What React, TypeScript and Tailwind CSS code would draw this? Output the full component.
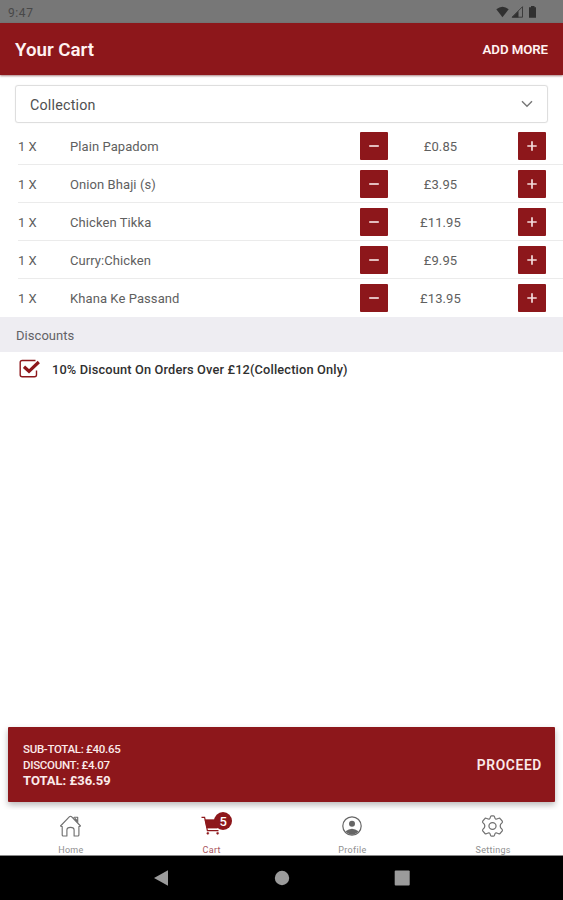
import React from "react";

const items = [
  { name: "Plain Papadom", price: "£0.85" },
  { name: "Onion Bhaji (s)", price: "£3.95" },
  { name: "Chicken Tikka", price: "£11.95" },
  { name: "Curry:Chicken", price: "£9.95" },
  { name: "Khana Ke Passand", price: "£13.95" },
];

function StatusBar() {
  return (
    <div className="flex h-[23px] shrink-0 items-center justify-between bg-[#777777] pl-2 pr-[24px] text-[#484848]">
      <span className="pt-[2px] text-[12px] leading-none tracking-[0.6px]">9:47</span>
      <svg width="43" height="14" viewBox="0 0 43 14" fill="#303030">
        <path d="M0.3 4.2Q6.5-0.8 12.7 4.2L6.5 12.2Z" />
        <path d="M16 12.2L26.5 1.7V12.2Z" fill="none" stroke="#3c3c3c" strokeWidth="1" />
        <path d="M16 12.5L22.5 6V12.5Z" />
        <path d="M33 2.2H35V1H38.5V2.2H40V12.8H33Z" />
      </svg>
    </div>
  );
}

function StepButton({ plus = false }: { plus?: boolean }) {
  return (
    <button className="flex h-7 w-7 shrink-0 items-center justify-center rounded-[1px] bg-[#8d171b]">
      <svg width="12" height="12" viewBox="0 0 12 12" stroke="#f3dcdc" strokeWidth="1.7">
        <path d={plus ? "M1.3 6H10.7M6 1.3V10.7" : "M1.2 6H10.8"} />
      </svg>
    </button>
  );
}

function HomeIcon() {
  return (
    <svg className="translate-x-[0.5px]" width="22" height="22" viewBox="0 0 22 22" fill="none" stroke="#707070" strokeWidth="1.15" strokeLinejoin="round">
      <path d="M1 11L10 1.7Q11 0.8 12 1.7L21 11L19.4 11.6V20Q19.4 21 18.4 21H14.6V15Q14.6 12.4 11 12.4Q7.4 12.4 7.4 15V21H3.7Q2.7 21 2.7 20V11.6Z" />
      <path d="M14 3.6L14.7 2.2H18.2V7.8" />
      <path d="M15 3.5L18 6.5" strokeWidth="1.8" />
    </svg>
  );
}

function CartIcon() {
  return (
    <div className="relative h-[22px] w-[22px]">
      <svg className="absolute left-px top-0" width="22" height="22" viewBox="0 0 22 22" fill="none" stroke="#8d171b">
        <path d="M0.5 2.3H3.6L6.4 15.6H17.5" strokeWidth="1.2" />
        <path d="M4.2 4.8H18L16.5 13H6Z" fill="#8d171b" strokeWidth="0.8" />
        <circle cx="6.8" cy="18.3" r="1.1" fill="#8d171b" strokeWidth="0.3" />
        <circle cx="16.6" cy="18.3" r="1.1" fill="#8d171b" strokeWidth="0.3" />
      </svg>
      <span className="absolute -top-[3px] left-[14px] flex h-[18px] w-[18px] items-center justify-center rounded-full bg-[#8d171b] text-[13px] font-medium leading-none text-white">5</span>
    </div>
  );
}

function ProfileIcon() {
  return (
    <svg width="22" height="22" viewBox="0 0 22 22">
      <circle cx="11" cy="11" r="9.2" fill="none" stroke="#666666" strokeWidth="1.2" />
      <circle cx="11" cy="8.7" r="3" fill="#666666" />
      <path d="M4.5 16.3Q11 11.3 17.5 16.3Q14.7 19.7 11 19.7Q7.3 19.7 4.5 16.3Z" fill="#666666" />
    </svg>
  );
}

function SettingsIcon() {
  return (
    <svg width="23" height="22" viewBox="0 0 24 24" preserveAspectRatio="none" fill="none" stroke="#707070" strokeWidth="1.3" strokeLinejoin="round">
      <path d="M8.8 4.4Q9.6 4 9.8 2.2Q10 1 11 1H13Q14 1 14.2 2.2Q14.4 4 15.2 4.4Q16 4.8 17.3 4.1L18.5 3.6Q19.6 3.1 20.2 4.2L22.2 6.8Q22.8 7.8 21.8 8.6Q20 9.8 20 12Q20 14.2 21.8 15.4Q22.8 16.2 22.2 17.2L20.2 19.8Q19.6 20.9 18.5 20.4L17.3 19.9Q16 19.2 15.2 19.6Q14.4 20 14.2 21.8Q14 23 13 23H11Q10 23 9.8 21.8Q9.6 20 8.8 19.6Q8 19.2 6.7 19.9L5.5 20.4Q4.4 20.9 3.8 19.8L1.8 17.2Q1.2 16.2 2.2 15.4Q4 14.2 4 12Q4 9.8 2.2 8.6Q1.2 7.8 1.8 6.8L3.8 4.2Q4.4 3.1 5.5 3.6L6.7 4.1Q8 4.8 8.8 4.4Z" />
      <circle cx="12" cy="12" r="3.7" />
    </svg>
  );
}

const tabs = [
  { label: "Home", icon: <HomeIcon />, color: "text-[#909090]" },
  { label: "Cart", icon: <CartIcon />, color: "text-[#a9555e]" },
  { label: "Profile", icon: <ProfileIcon />, color: "text-[#909090]" },
  { label: "Settings", icon: <SettingsIcon />, color: "text-[#909090]" },
];

export default function App() {
  return (
    <div className="flex h-[900px] w-[563px] flex-col overflow-hidden bg-white font-[Roboto,'Liberation_Sans',sans-serif]">
      <StatusBar />
      <header className="flex h-[52px] shrink-0 items-center justify-between bg-[#8d171b] px-[15px] text-[#fff2f2] shadow-[0_1px_2px_rgba(80,0,0,0.5)]">
        <h1 className="pt-[3px] text-[18.7px] font-semibold leading-none">Your Cart</h1>
        <button className="pt-[2px] text-[13.3px] font-semibold leading-none tracking-[-0.1px]">ADD MORE</button>
      </header>

      <div className="mx-[15px] mt-[10px] flex h-[38px] shrink-0 items-center justify-between rounded-[3px] border border-[#dedede] pl-[14px] pr-[14px] text-[#505050] shadow-[0_0_1px_#dddddd]">
        <span className="pt-[2px] text-[14.3px] leading-none tracking-[0.2px]">Collection</span>
        <svg width="12" height="8" viewBox="0 0 12 8" fill="none" stroke="#777777" strokeWidth="1.4">
          <path d="M1 1.2L6 6.3L11 1.2" />
        </svg>
      </div>

      <ul className="mt-[4px] shrink-0 text-[13px] text-[#606060]">
        {items.map((item, index) => (
          <li key={item.name} className="pl-[18px]">
            <div className={"flex h-[38px] items-center border-b pr-[17px] " + (index < items.length - 1 ? "border-[#ebebeb]" : "border-white")}>
              <span className="w-[52px] shrink-0 pt-[2px]">1 X</span>
              <span className="flex-1 pt-[2px] tracking-[0.08px]">{item.name}</span>
              <StepButton />
              <span className="w-[130px] shrink-0 pr-[25px] pt-[2px] text-center tracking-[0.1px]">{item.price}</span>
              <StepButton plus />
            </div>
          </li>
        ))}
      </ul>

      <h2 className="flex h-[35px] shrink-0 items-center bg-[#eeedf2] pl-4 pt-[2px] text-[13px] tracking-[0.05px] text-[#626266]">Discounts</h2>
      <label className="flex h-[34px] shrink-0 items-center pl-[19px] text-[12.8px] font-medium tracking-[0.15px] text-[#303030]">
        <svg className="mr-[11px]" width="22" height="20" viewBox="0 0 22 20" fill="none" stroke="#8d171b">
          <path d="M16.5 1.5H3.2Q1.2 1.5 1.2 3.5V15.8Q1.2 17.8 3.2 17.8H15.5Q17.5 17.8 17.5 15.8V11.5" strokeWidth="1.4" />
          <path d="M5 7.8L10 12.3L19.8 3" strokeWidth="3.2" />
        </svg>
        <span className="pt-px">10% Discount On Orders Over £12(Collection Only)</span>
      </label>

      <div className="flex-1" />

      <section className="mb-2 ml-[8px] mr-[8px] flex h-[75px] shrink-0 items-center justify-between rounded-[1px] bg-[#8d171b] pl-[15px] pr-[13px] text-[#fbeaea] shadow-[0_3px_6px_rgba(0,0,0,0.28)]">
        <div className="text-[11.5px] font-medium leading-4 tracking-[-0.3px]">
          <p>SUB-TOTAL: £40.65</p>
          <p>DISCOUNT: £4.07</p>
          <p className="text-[13px] font-bold tracking-[0px]">TOTAL: £36.59</p>
        </div>
        <button className="pt-px text-[13.8px] font-semibold tracking-[0.65px]">PROCEED</button>
      </section>

      <nav className="relative grid h-[46px] shrink-0 grid-cols-4 border-b border-[#888888] bg-white">
        {tabs.map((tab) => (
          <div key={tab.label} className="flex flex-col items-center pt-[5px]">
            {tab.icon}
            <span className={"mt-[7px] pl-px text-[9px] leading-[12px] tracking-[0.3px] " + tab.color}>{tab.label}</span>
          </div>
        ))}
      </nav>
      <div className="flex h-[44px] shrink-0 items-center justify-center bg-black">
        <svg width="258" height="16" viewBox="0 0 258 16" fill="#9b9b9b">
          <path d="M1 8L15 0.2V15.8Z" />
          <circle cx="129" cy="8" r="7.2" />
          <rect x="241.7" y="0.5" width="15" height="15" rx="1" />
        </svg>
      </div>
    </div>
  );
}
